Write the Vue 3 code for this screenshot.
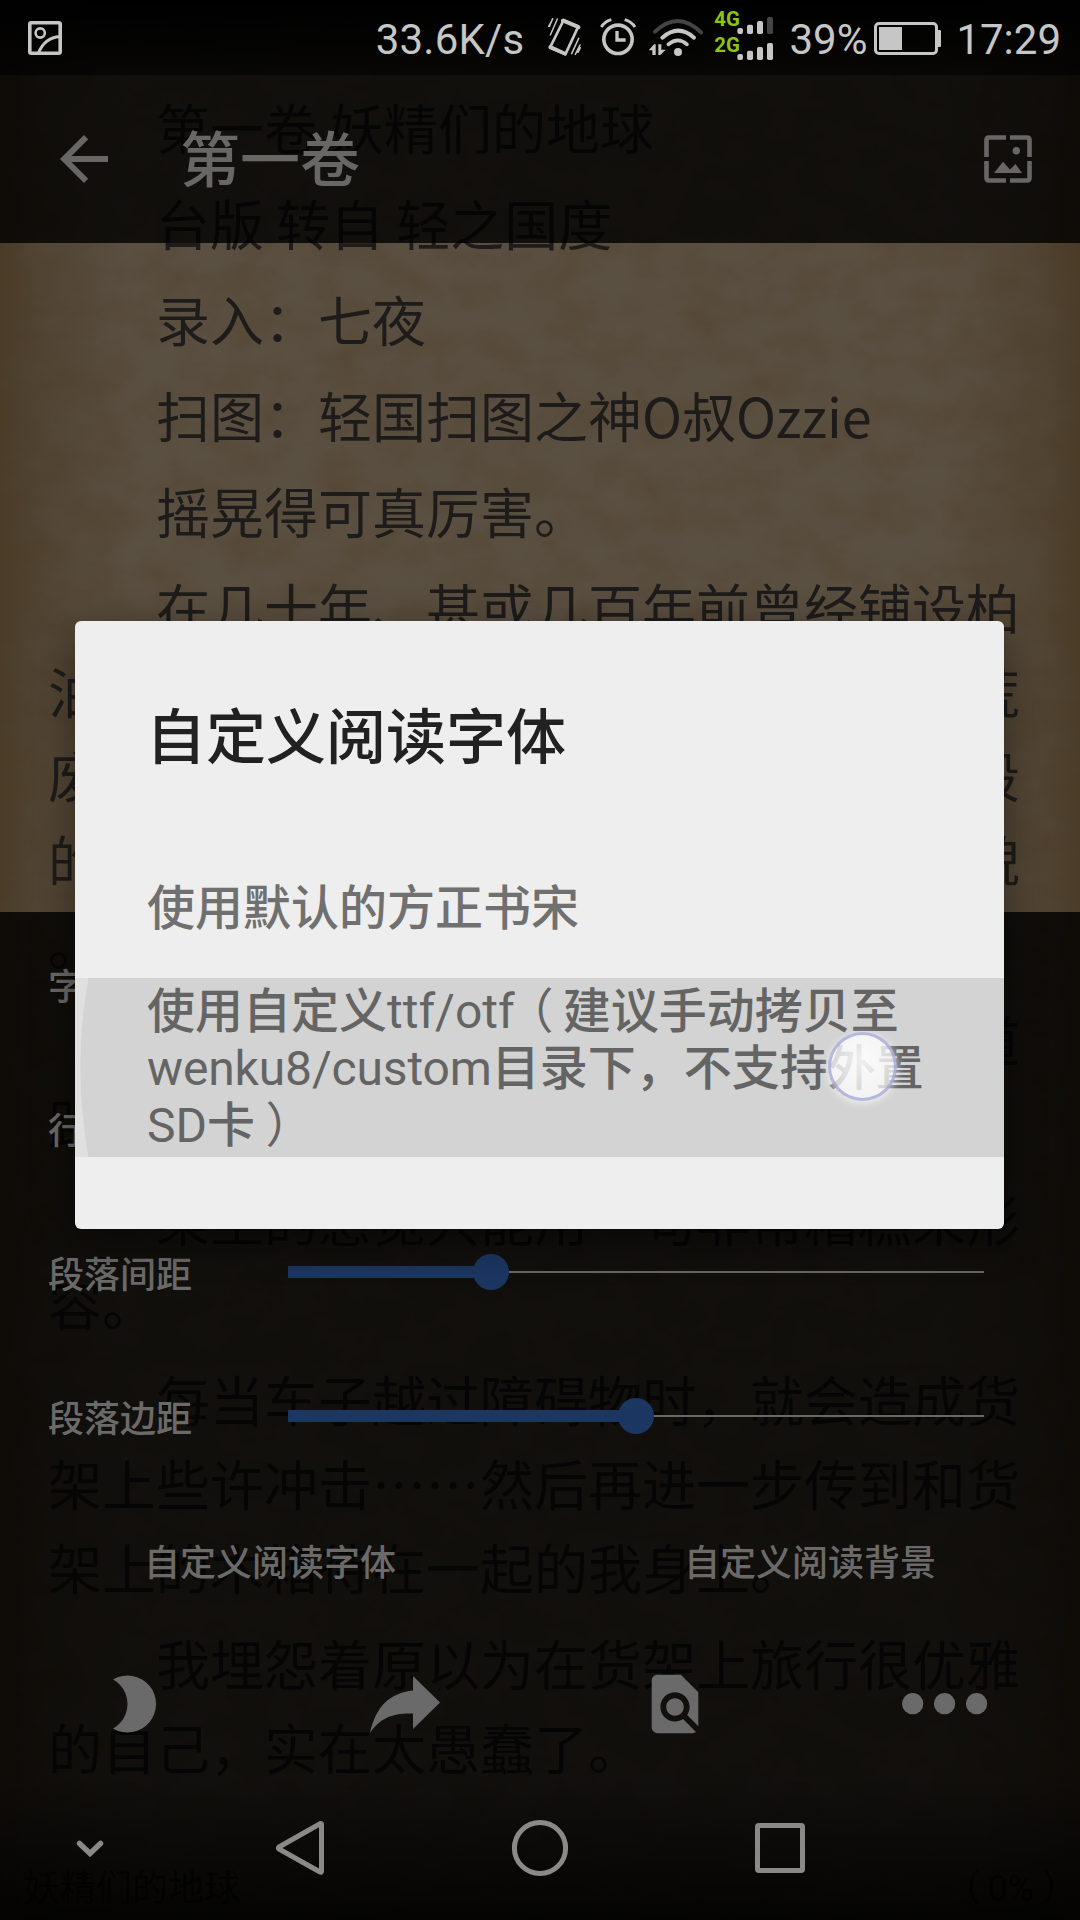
<script setup>
const before = [
  ['第一卷 妖精们的地球'],
  ['台版 转自 轻之国度'],
  ['录入：七夜'],
  ['扫图：轻国扫图之神O叔Ozzie'],
  ['摇晃得可真厉害。'],
]
const after = [
  ['每当车子越过障碍物时，就会造成货', '架上些许冲击……然后再进一步传到和货', '架上的木箱待在一起的我身上。'],
  ['我埋怨着原以为在货架上旅行很优雅', '的自己，实在太愚蠢了。'],
]
const sliders = [
  { label: '段落间距', value: 29.2 },
  { label: '段落边距', value: 50 },
]
</script>

<template>
  <div class="screen">
    <div class="layer paper">
      <svg class="grain" width="1080" height="1920">
        <filter id="fibre" x="0" y="0" width="100%" height="100%" color-interpolation-filters="sRGB">
          <feTurbulence type="fractalNoise" baseFrequency="0.022 0.03" numOctaves="4" seed="8" />
          <feColorMatrix values="0 0 0 0 0.3  0 0 0 0 0.22  0 0 0 0 0.12  1.8 0 0 0 -0.6" />
        </filter>
        <rect width="1080" height="1920" filter="url(#fibre)" />
      </svg>
    </div>

    <div class="layer reader">
      <p v-for="(p, i) in before" :key="'b' + i"><span class="indent">{{ p[0] }}</span></p>
      <p>
        <span class="indent">在几十年、甚或几百年前曾经铺设柏</span>
        <span class="split"><i>油</i><i>荒</i></span>
        <span class="split"><i>废</i><i>段</i></span>
        <span class="split"><i>的</i><i>貌</i></span>
        <span>。</span>
      </p>
      <p>
        <span class="split end"><i>道</i></span>
        <span>路</span>
      </p>
      <p>
        <span class="indent">乘坐的感觉只能用一句非常糟糕来形</span>
        <span>容。</span>
      </p>
      <p v-for="(p, i) in after" :key="'a' + i">
        <span v-for="(l, j) in p" :key="j" :class="{ indent: j === 0 }">{{ l }}</span>
      </p>
      <div class="page-foot"><span>妖精们的地球</span><span><b class="open">（</b>0%<b class="close">）</b></span></div>
    </div>

    <div class="layer chrome">
      <header>
        <div class="status">
          <svg class="notif" width="34" height="34" viewBox="0 0 34 34" fill="none" stroke="#c6c6c6">
            <rect x="1.8" y="1.8" width="30.4" height="30.4" rx="1.5" stroke-width="3.6" />
            <circle cx="12.2" cy="12" r="4.6" stroke-width="2.6" />
            <path d="M10.5 32C14 23 20 16.5 32 15.5" stroke-width="3" />
          </svg>
          <span class="speed">33.6K/s</span>
          <svg class="vib" width="35" height="75" viewBox="84 0 105 225" fill="none" stroke="#c6c6c6" stroke-linecap="round" stroke-linejoin="round">
            <path d="M134 60L178 79L139 163L93 143Z" stroke-width="8" />
            <path d="M131 62L179 82M94 141L138 161" stroke-width="11" />
            <path d="M115 57L94 105M101 56L91 79M96 66L89 79M179 115L158 161M183 135L169 163M184 143L177 157" stroke-width="4.5" />
          </svg>
          <svg class="alarm" width="38" height="75" viewBox="240 0 114 225" fill="none" stroke="#c6c6c6">
            <circle cx="297" cy="118" r="42.500" stroke-width="11" />
            <path d="M294 93V120H320" stroke-width="10" />
            <path d="M247 81Q257 65 277 59M348 81Q337 65 317 59" stroke-width="9" />
          </svg>
          <svg class="wifi" width="56" height="75" viewBox="387 0 168 225" fill="none" stroke="#c6c6c6" stroke-linecap="round">
            <path d="M408 95Q477 30 546 97" stroke="#444" stroke-width="12" />
            <path d="M430 113Q478 71 525 113" stroke-width="12" />
            <path d="M448 133Q477 109 504 133" stroke-width="11" />
            <circle cx="477" cy="156" r="12" fill="#c6c6c6" stroke="none" />
            <path d="M389 151L405 133H410V165H400V151ZM418 133H427V149H440L424 165H418Z" fill="#c6c6c6" stroke="none" />
          </svg>
          <svg class="signal" width="61" height="75" viewBox="585 0 183 225" fill="#c6c6c6">
            <text x="586" y="78">4G</text>
            <text x="586" y="156">2G</text>
            <rect x="655" y="84" width="17" height="18" rx="6" />
            <rect x="684" y="74" width="18" height="28" rx="5" />
            <rect x="714" y="63" width="18" height="39" rx="5" />
            <rect x="744" y="51" width="18" height="51" rx="5" fill="#444" />
            <rect x="655" y="162" width="17" height="18" rx="6" />
            <rect x="684" y="152" width="18" height="28" rx="5" />
            <rect x="714" y="141" width="18" height="39" rx="5" />
            <rect x="744" y="129" width="18" height="51" rx="5" />
          </svg>
          <span class="percent">39%</span>
          <svg class="battery" width="68" height="75" viewBox="0 0 68 75">
            <rect x="1.500" y="23.500" width="61" height="30" rx="3.500" fill="none" stroke="#c6c6c6" stroke-width="3" />
            <rect x="5" y="27" width="23" height="23" fill="#c6c6c6" />
            <path d="M63 30H66Q67 30 67 31V46Q67 47 66 47H63Z" fill="#c6c6c6" />
          </svg>
          <span class="time">17:29</span>
        </div>
        <div class="toolbar">
          <svg width="72" height="72" viewBox="0 0 24 24" fill="#686766">
            <path d="M20 11H7.83l5.59-5.59L12 4l-8 8 8 8 1.41-1.41L7.83 13H20v-2z" />
          </svg>
          <h1>第一卷</h1>
          <svg width="48" height="48" viewBox="0 0 48 48">
            <path d="M2.500 22V5Q2.500 2.500 5 2.500H22M26 2.500H43Q45.500 2.500 45.500 5V22M45.500 26V43Q45.500 45.500 43 45.500H26M22 45.500H5Q2.500 45.500 2.500 43V26" fill="none" stroke="#686766" stroke-width="4.600" />
            <circle cx="32.300" cy="15.700" r="3.700" fill="#686766" />
            <path d="M10 38L19 26.700L26 34.500L31.500 29L38 38Z" fill="#686766" />
          </svg>
        </div>
      </header>

      <section class="panel">
        <div class="row"><label>字体大小</label></div>
        <div class="row"><label>行间距</label></div>
        <div v-for="s in sliders" :key="s.label" class="row">
          <label>{{ s.label }}</label>
          <div class="track">
            <div class="fill" :style="{ width: s.value + '%' }"></div>
            <div class="thumb"></div>
            <div class="rest"></div>
          </div>
        </div>
        <div class="cells text"><span>自定义阅读字体</span><span>自定义阅读背景</span></div>
        <div class="cells icons">
          <span><svg width="44" height="58" viewBox="0 0 44 58"><path d="M0 4.500A28.500 28.500 0 1 1 0 53.500A28 28 0 0 0 0 4.500Z" /></svg></span>
          <span><svg width="70" height="58" viewBox="0 0 70 58"><path d="M70 27.500L43 1V15.500C20 18 6 31 0 58C10 43 22 38 43 38.500V54Z" /></svg></span>
          <span><svg width="70" height="70" viewBox="0 0 24 24"><path d="M20 19.590V8l-6-6H6c-1.100 0-1.990.9-1.990 2L4 20c0 1.100.89 2 1.990 2H18c.45 0 .85-.15 1.190-.4l-4.430-4.430c-.8.52-1.740.83-2.760.83-2.760 0-5-2.240-5-5s2.240-5 5-5 5 2.240 5 5c0 1.020-.31 1.960-.83 2.750L20 19.590zM9 13c0 1.660 1.340 3 3 3s3-1.340 3-3-1.340-3-3-3-3 1.340-3 3z" /></svg></span>
          <span><svg width="86" height="22" viewBox="0 0 86 22"><circle cx="10.700" cy="10.700" r="10.600" /><circle cx="42.600" cy="10.700" r="10.600" /><circle cx="74.600" cy="10.700" r="10.600" /></svg></span>
        </div>
        <nav>
          <svg width="180" height="144" viewBox="0 0 180 144"><path d="M79.500 67.500L90 77.500L100.500 67.500" stroke-linecap="round" stroke-width="5.500" /></svg>
          <svg width="240" height="144" viewBox="180 0 240 144"><path d="M320.500 47.500Q321.500 47.500 321.500 48.500V95.500Q321.500 96.500 320.500 96.200L279 73Q277.500 72 279 71Z" stroke-linejoin="round" stroke-width="5" /></svg>
          <svg width="240" height="144" viewBox="420 0 240 144"><circle cx="540" cy="72" r="25.600" stroke-width="5" /></svg>
          <svg width="240" height="144" viewBox="660 0 240 144"><rect x="757.500" y="49.500" width="45" height="45" rx="1.500" stroke-width="5" /></svg>
        </nav>
      </section>
    </div>

    <div class="layer modal">
      <div class="dialog">
        <h2>自定义阅读字体</h2>
        <div class="option first">使用默认的方正书宋</div>
        <div class="option pressed">
          <div>使用自定义<em>ttf/otf</em><b class="open">（</b>建议手动拷贝至</div>
          <div><em class="tight">wenku8/custom</em>目录下，不支持外置</div>
          <div><em>SD</em>卡<b class="close">）</b></div>
          <span class="touch"></span>
        </div>
      </div>
    </div>
  </div>
</template>

<style>
body { background: #000; }
</style>

<style scoped>
.screen {
  display: grid;
  grid-template: 1920px / 1080px;
  width: 1080px;
  height: 1920px;
  overflow: hidden;
  font-family: Roboto, "Noto Sans CJK SC", sans-serif;
}
.layer { grid-area: 1 / 1; min-width: 0; z-index: 1; }
.paper {
  background:
    linear-gradient(90deg, #4a3c29 0, rgba(74, 60, 41, 0.6) 35px, transparent 130px, transparent 940px, rgba(74, 60, 41, 0.6) 1050px, #4a3c29 1080px),
    #5a5042;
}
.grain { display: block; opacity: 0.3; }
.reader {
  display: flex;
  flex-direction: column;
  padding: 85px 60px 0 48px;
  font: 54px/84px "Noto Sans CJK SC", sans-serif;
  color: #1d1c1a;
  white-space: nowrap;
}
p { margin: 0 0 12px; }
p span { display: block; height: 84px; }
p .indent { padding-left: 108px; }
p .split { display: flex; justify-content: space-between; }
p .end { justify-content: flex-end; }
i, em { font-style: normal; }
b { position: relative; font-weight: 400; }
.open { left: -0.19em; }
.close { left: 0.22em; }
.page-foot {
  display: flex;
  justify-content: space-between;
  margin: auto -50px 13px -24px;
  font: 36px/36px Roboto, "Noto Sans CJK SC", sans-serif;
}
.chrome { display: flex; flex-direction: column; justify-content: space-between; }
header { background: rgba(0, 0, 0, 0.8); }
.status {
  display: flex;
  align-items: center;
  height: 75px;
  padding: 0 19px 0 28px;
  background: linear-gradient(#000, rgba(0, 0, 0, 0.6));
  color: #c6c6c6;
  font-size: 42px;
  line-height: 75px;
}
.speed, .percent, .time { position: relative; top: 2px; }
.speed { margin-left: auto; letter-spacing: 0.2px; }
.vib { margin-left: 23px; }
.alarm { margin-left: 17px; }
.wifi { margin-left: 11px; }
.signal { margin-left: 10px; }
.signal text { font: 700 61px Roboto, sans-serif; fill: #8ac70c; }
.percent { margin-left: 14px; }
.battery { margin-left: 7px; }
.time { margin-left: 14px; }
.toolbar { display: flex; align-items: center; height: 168px; padding: 0 48px; }
h1 { flex: 1; margin: 6px 0 0 60px; font-size: 60px; font-weight: 500; line-height: 84px; color: #686766; }
.panel { height: 1008px; background: rgba(0, 0, 0, 0.8); color: #6b6a69; }
.row { display: flex; align-items: center; height: 144px; padding: 0 96px 0 48px; font-size: 36px; font-weight: 500; }
label { width: 240px; }
.track { flex: 1; display: flex; align-items: center; }
.fill { height: 12px; background: #1b3661; }
.thumb { width: 36px; height: 36px; margin: 0 -18px; border-radius: 50%; background: #1b3661; z-index: 1; }
.rest { flex: 1; height: 2px; background: #686866; }
.cells { display: flex; height: 144px; }
.cells span { flex: 1; display: flex; align-items: center; justify-content: center; }
.text { font-size: 36px; font-weight: 500; }
.icons svg { fill: #6a6a6a; }
nav { display: flex; height: 144px; background: linear-gradient(transparent, rgba(0, 0, 0, 0.75)); }
nav svg { fill: none; stroke: #8a8987; }
.modal { display: flex; flex-direction: column; align-items: flex-start; padding: 621px 0 0 75px; }
.dialog {
  width: 929px;
  height: 608px;
  border-radius: 6px;
  background: #eee;
  color: #707070;
  box-shadow: 0 12px 40px rgba(0, 0, 0, 0.45);
}
h2 { margin: 0; padding: 73px 71px 0; font-size: 60px; font-weight: 500; line-height: 90px; color: #212121; }
.option { padding: 5px 72px 3px; font-size: 48px; font-weight: 500; line-height: 57px; white-space: nowrap; }
.option em { font-weight: 400; }
.option .tight { letter-spacing: -0.15px; }
.first { height: 57px; margin-top: 91px; margin-bottom: 38px; }
.pressed {
  position: relative;
  height: 171px;
  color: #646464;
  background: radial-gradient(circle at 510px 50%, #d3d3d3 504px, #e0e0e0 505px);
}
.pressed div { height: 57px; }
.touch {
  position: absolute;
  left: 753px;
  top: 54px;
  width: 63px;
  height: 63px;
  border: 3px solid rgba(140, 145, 205, 0.6);
  border-radius: 50%;
  background: radial-gradient(circle at 50% 40%, rgba(255, 255, 255, 0.9), rgba(255, 255, 255, 0.65));
  box-shadow: 0 2px 8px rgba(255, 255, 255, 0.7);
}
</style>
